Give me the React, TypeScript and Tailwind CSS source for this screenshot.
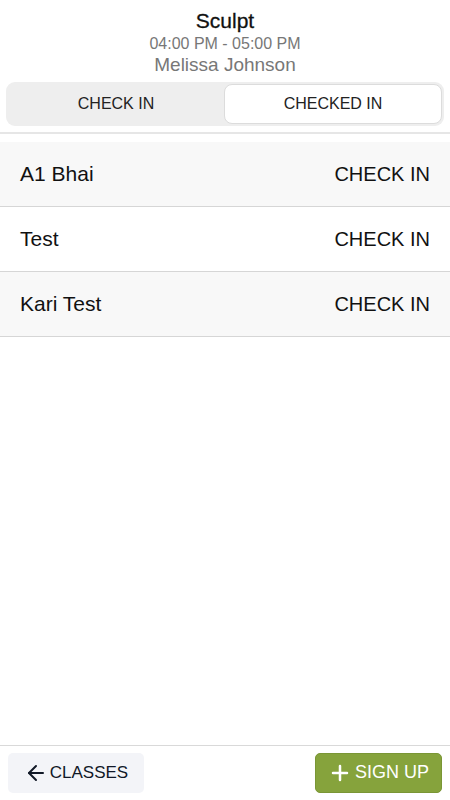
import { ArrowLeft, Plus } from "lucide-react";

const attendees = ["A1 Bhai", "Test", "Kari Test"];

export default function App() {
  return (
    <div
      className="w-[450px] h-[800px] flex flex-col bg-white text-black"
      style={{ fontFamily: '"Liberation Sans", Arial, sans-serif' }}
    >
      {/* Header */}
      <div className="flex flex-col items-center pt-[8px]">
        <div className="text-[21px] leading-[26px] text-[#111] [-webkit-text-stroke:0.3px_#111]">Sculpt</div>
        <div className="text-[16px] leading-[19px] text-[#777]">04:00 PM - 05:00 PM</div>
        <div className="text-[19px] leading-[23px] text-[#777]">Melissa Johnson</div>
      </div>

      {/* Tabs */}
      <div className="px-[6px] pt-[6px] pb-[6px] border-b-[2px] border-[#e6e6e6]">
        <div className="flex h-[44px] rounded-[9px] bg-[#eeeeee] p-[2px]">
          <button className="flex-1 flex items-center justify-center text-[16px] text-[#222]">
            CHECK IN
          </button>
          <button className="flex-1 flex items-center justify-center text-[16px] text-[#222] bg-white rounded-[8px] border border-[#dcdcdc]">
            CHECKED IN
          </button>
        </div>
      </div>

      {/* List */}
      <div className="flex-1 pt-[8px]">
        {attendees.map((name, i) => (
          <div
            key={name}
            className={`flex items-center justify-between h-[65px] px-[20px] border-b border-[#d6d6d6] ${
              i % 2 === 0 ? "bg-[#f8f8f8]" : "bg-white"
            }`}
          >
            <span className="text-[21px] text-[#111]">{name}</span>
            <span className="text-[20px] text-[#111]">CHECK IN</span>
          </div>
        ))}
      </div>

      {/* Footer */}
      <div className="h-[55px] border-t border-[#d9d9d9] flex items-center justify-between px-[8px] pb-[1px]">
        <button className="h-[40px] w-[136px] rounded-[5px] bg-[#f3f4f8] flex items-center justify-center gap-[2px] text-[17px] text-[#111827]">
          <ArrowLeft size={24} strokeWidth={2} />
          CLASSES
        </button>
        <button className="h-[40px] w-[127px] rounded-[5px] bg-[#86a33c] border border-[#7a9635] flex items-center justify-center gap-[3px] text-[18px] text-white">
          <Plus size={24} strokeWidth={2.5} />
          SIGN UP
        </button>
      </div>
    </div>
  );
}
